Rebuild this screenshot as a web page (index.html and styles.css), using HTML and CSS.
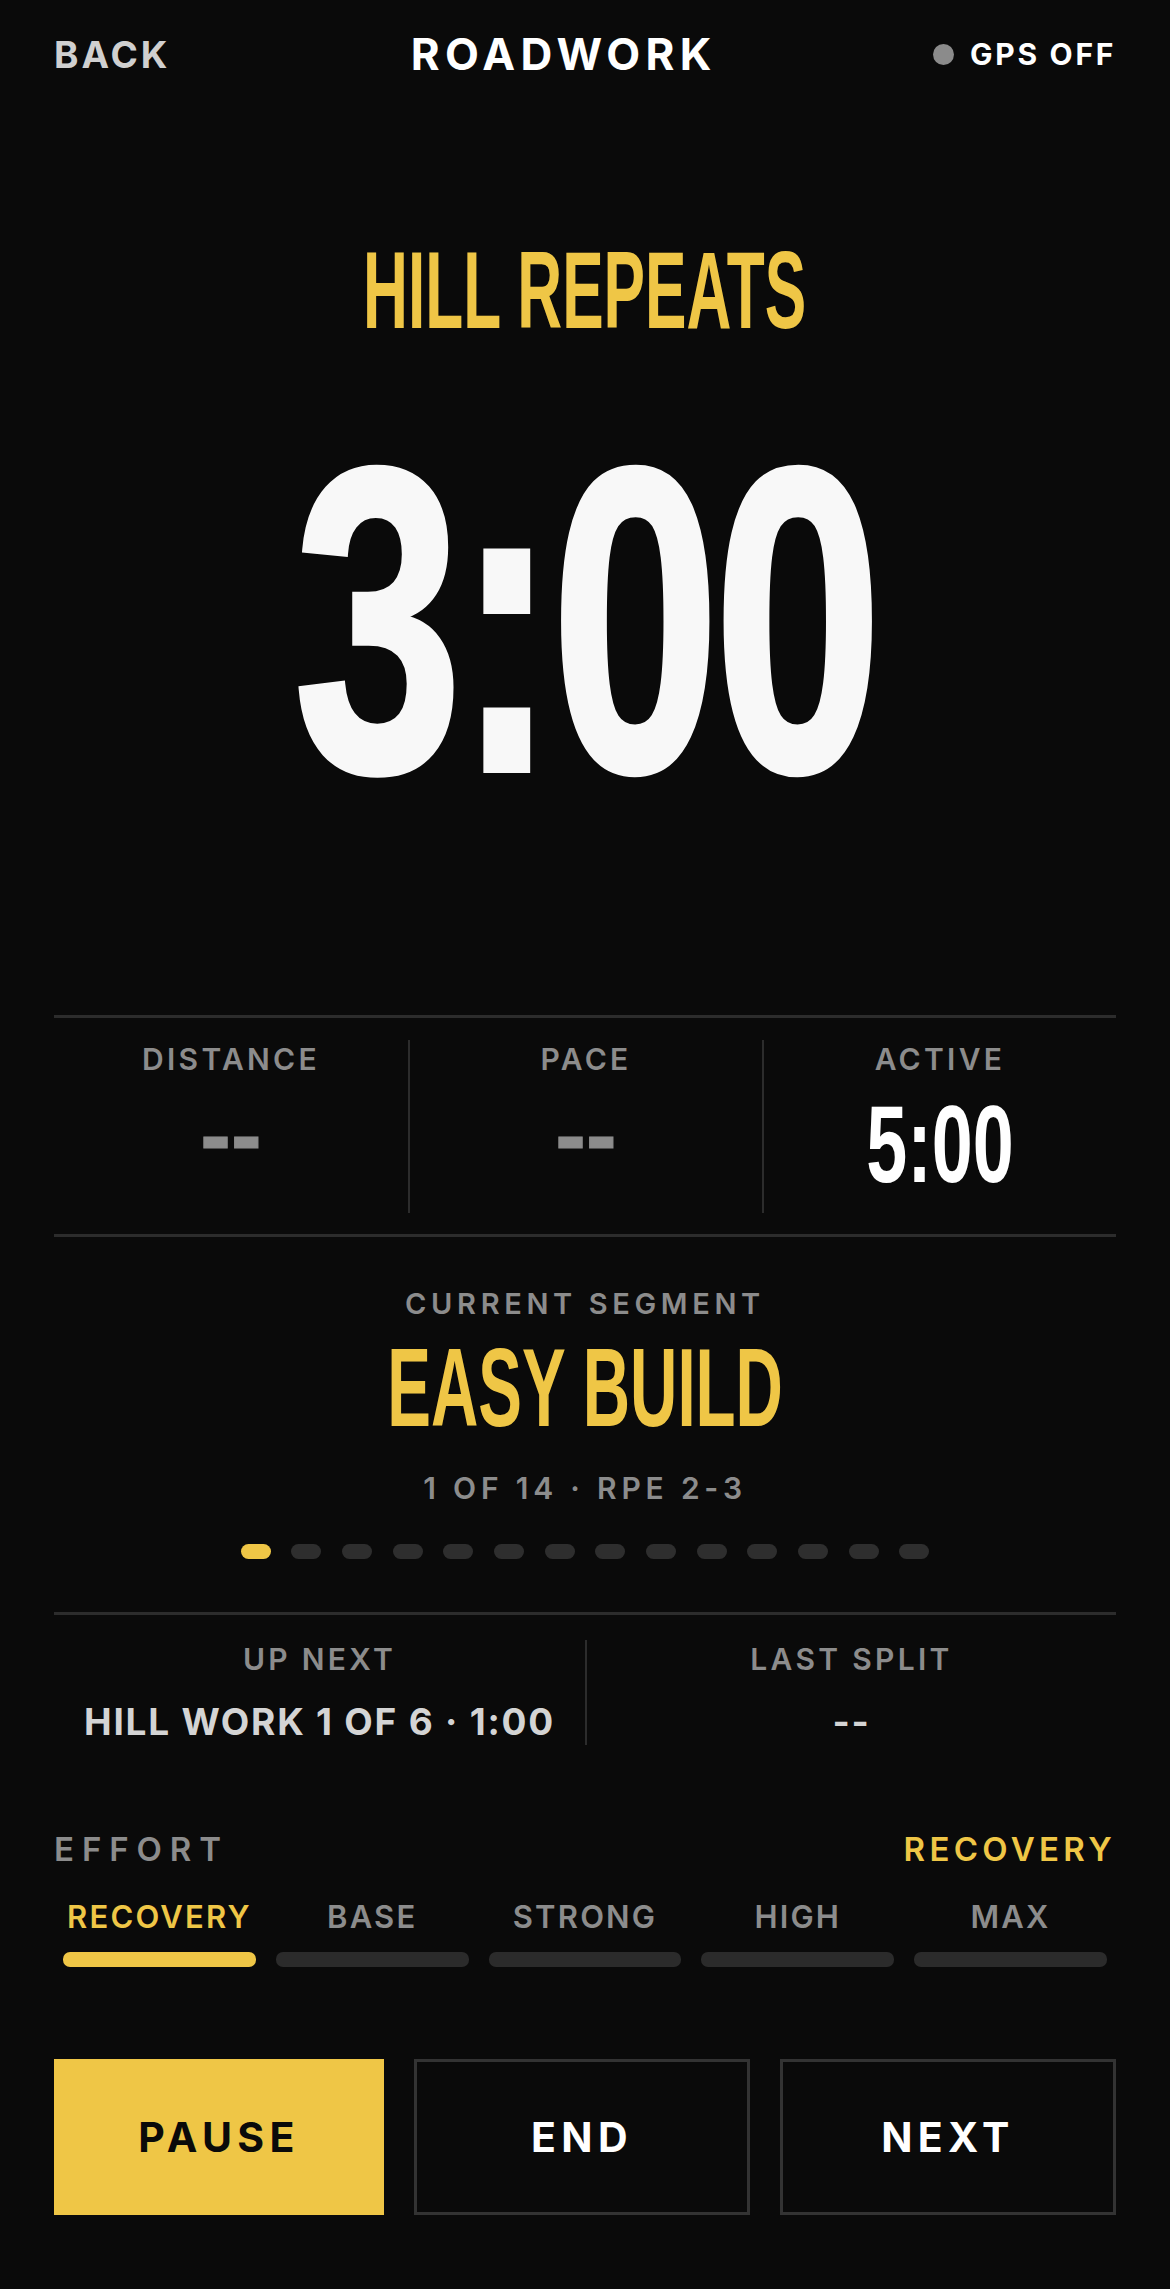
FILE: index.html
```html
<!DOCTYPE html>
<html lang="en">
<head>
    <meta charset="UTF-8">
    <meta name="viewport" content="width=device-width, initial-scale=1.0">
    <title>Roadwork</title>
    <link rel="stylesheet" href="styles.css">
</head>
<body>
    <main class="screen">
        <header class="topbar">
            <span class="back">BACK</span>
            <span class="brand">ROADWORK</span>
            <span class="gps"><i class="gps_dot"></i>GPS OFF</span>
        </header>

        <section class="hero">
            <h1 class="workout"><span>HILL REPEATS</span></h1>
            <div class="timer"><span>3:00</span></div>
        </section>

        <section class="stats">
            <div class="stat">
                <p class="label">DISTANCE</p>
                <p class="stat_value muted"><span>--</span></p>
            </div>
            <div class="stat">
                <p class="label">PACE</p>
                <p class="stat_value muted"><span>--</span></p>
            </div>
            <div class="stat">
                <p class="label">ACTIVE</p>
                <p class="stat_value"><span>5:00</span></p>
            </div>
        </section>

        <section class="segment">
            <p class="label">CURRENT SEGMENT</p>
            <h2 class="segment_name"><span>EASY BUILD</span></h2>
            <p class="segment_meta">1 OF 14 · RPE 2-3</p>
            <div class="dots">
                <i class="dot on"></i><i class="dot"></i><i class="dot"></i><i class="dot"></i>
                <i class="dot"></i><i class="dot"></i><i class="dot"></i><i class="dot"></i>
                <i class="dot"></i><i class="dot"></i><i class="dot"></i><i class="dot"></i>
                <i class="dot"></i><i class="dot"></i>
            </div>
        </section>

        <section class="upnext">
            <div class="upnext_col">
                <p class="label">UP NEXT</p>
                <p class="upnext_value">HILL WORK 1 OF 6 · 1:00</p>
            </div>
            <div class="upnext_col">
                <p class="label">LAST SPLIT</p>
                <p class="upnext_value">--</p>
            </div>
        </section>

        <section class="effort">
            <div class="effort_head">
                <span class="effort_title">EFFORT</span>
                <span class="effort_now">RECOVERY</span>
            </div>
            <div class="zones">
                <div class="zone active"><span>RECOVERY</span><i></i></div>
                <div class="zone"><span>BASE</span><i></i></div>
                <div class="zone"><span>STRONG</span><i></i></div>
                <div class="zone"><span>HIGH</span><i></i></div>
                <div class="zone"><span>MAX</span><i></i></div>
            </div>
        </section>

        <section class="controls">
            <button class="btn btn_pause">PAUSE</button>
            <button class="btn">END</button>
            <button class="btn">NEXT</button>
        </section>
    </main>
</body>
</html>
```

FILE: styles.css
```css
* {
    margin: 0;
    padding: 0;
    box-sizing: border-box;
}

body {
    background-color: #0a0a0a;
    color: #fff;
    font-family: Inter, "Noto Sans", sans-serif;
    line-height: 1;
}

.screen {
    padding: 0 54px 75px;
}

/* top bar */
.topbar {
    height: 108px;
    display: flex;
    justify-content: space-between;
    align-items: center;
    font-weight: 700;
}

.back { font-size: 37px; letter-spacing: 0.08em; color: #d0d0d0; }
.brand { font-size: 44px; letter-spacing: 0.12em; color: #fff; margin-left: 24px; }

.gps {
    display: flex;
    align-items: center;
    font-size: 30px;
    letter-spacing: 0.09em;
}

.gps_dot {
    width: 21px;
    height: 21px;
    border-radius: 50%;
    background-color: #8b8b8b;
    margin-right: 16px;
}

/* condensed display text */
.workout, .timer, .stat_value, .segment_name {
    font-family: "Liberation Sans", Arial, sans-serif;
    font-weight: 700;
    text-align: center;
    line-height: 1;
}

.workout span, .timer span, .stat_value span, .segment_name span {
    display: inline-block;
}

.workout {
    margin-top: 128px;
    font-size: 109px;
    color: #efc646;
}
.workout span { transform: scaleX(0.57); }

.timer {
    margin-top: 59px;
    font-size: 433px;
    color: #f8f8f8;
}
.timer span {
    transform: scaleX(0.7);
    letter-spacing: -0.02em;
    -webkit-text-stroke: 6px #f8f8f8;
}

/* labels */
.label {
    font-size: 30px;
    font-weight: 600;
    letter-spacing: 0.11em;
    color: #8c8c8c;
    text-align: center;
}

/* stats */
.stats {
    margin-top: 178px;
    display: grid;
    grid-template-columns: 1fr 1fr 1fr;
    border-top: 3px solid #2c2c2c;
    border-bottom: 3px solid #2c2c2c;
    padding: 22px 0 21px;
}

.stat { padding: 4px 0 14px; }
.stat + .stat { border-left: 2px solid #2c2c2c; }

.stat_value {
    margin-top: 15px;
    font-size: 110px;
    color: #fff;
}
.stat_value span { transform: scaleX(0.67); }
.stat_value.muted { color: #8c8c8c; }
.stat_value.muted span {
    font-size: 92px;
    line-height: 1;
    vertical-align: top;
    transform: none;
    -webkit-text-stroke: 1px #8c8c8c;
}

/* current segment */
.segment {
    padding: 52px 0 53px;
    text-align: center;
}

.segment .label { font-size: 29px; letter-spacing: 0.16em; }

.segment_name {
    margin-top: 14px;
    font-size: 112px;
    color: #efc646;
}
.segment_name span { transform: scaleX(0.585); }

.segment_meta {
    margin-top: 29px;
    font-size: 30px;
    font-weight: 600;
    letter-spacing: 0.16em;
    color: #8c8c8c;
}

.dots {
    margin-top: 41px;
    display: flex;
    justify-content: center;
    gap: 20.7px;
}

.dot {
    width: 30px;
    height: 15px;
    border-radius: 8px;
    background-color: #2e2e2e;
}
.dot.on { background-color: #efc646; }

/* up next / last split */
.upnext {
    display: grid;
    grid-template-columns: 1fr 1fr;
    border-top: 3px solid #2c2c2c;
    padding-top: 25px;
}

.upnext_col { padding: 4px 0 5px; text-align: center; }
.upnext_col + .upnext_col { border-left: 2px solid #2c2c2c; }

.upnext_value {
    margin-top: 29px;
    font-size: 37px;
    font-weight: 700;
    letter-spacing: 0.048em;
    color: #d4d4d4;
}

/* effort */
.effort { margin-top: 88px; }

.effort_head {
    display: flex;
    justify-content: space-between;
    font-size: 33px;
    font-weight: 600;
}

.effort_title { letter-spacing: 0.24em; color: #8c8c8c; }
.effort_now { letter-spacing: 0.13em; color: #efc646; }

.zones {
    margin-top: 35px;
    display: grid;
    grid-template-columns: repeat(5, 1fr);
    gap: 20px;
    padding: 0 9px;
}

.zone {
    display: flex;
    flex-direction: column;
    align-items: center;
    font-size: 31px;
    font-weight: 600;
    letter-spacing: 0.07em;
    color: #8c8c8c;
}

.zone i {
    margin-top: 20px;
    width: 100%;
    height: 15px;
    border-radius: 7px;
    background-color: #2b2b2b;
}

.zone.active { color: #efc646; }
.zone.active i { background-color: #efc646; }

/* controls */
.controls {
    margin-top: 92px;
    display: grid;
    grid-template-columns: 330px 1fr 1fr;
    gap: 30px;
}

.btn {
    height: 156px;
    background-color: transparent;
    border: 3px solid #333;
    color: #fff;
    font-family: Inter, "Noto Sans", sans-serif;
    font-size: 41px;
    font-weight: 700;
    letter-spacing: 0.13em;
}

.btn_pause {
    background-color: #efc646;
    border-color: #efc646;
    color: #0a0a0a;
}
```
